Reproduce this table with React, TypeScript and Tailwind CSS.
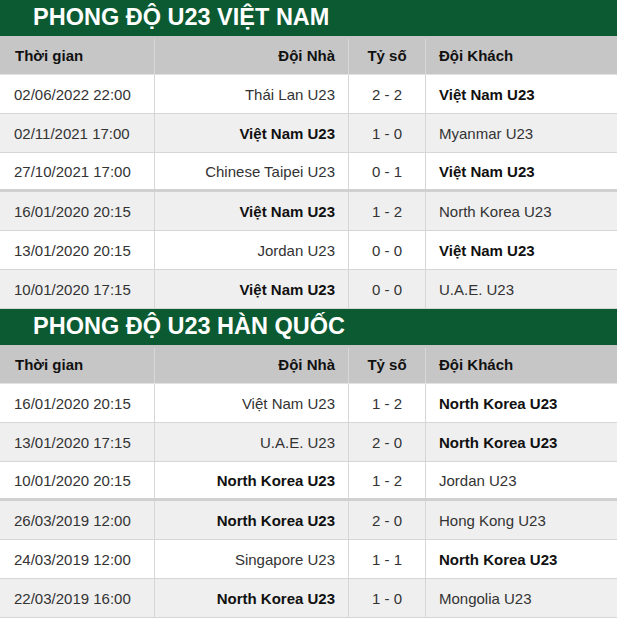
type Match = {
  time: string;
  home: string;
  score: string;
  away: string;
  homeBold?: boolean;
  awayBold?: boolean;
};

const vietnam: Match[] = [
  { time: "02/06/2022 22:00", home: "Thái Lan U23", score: "2 - 2", away: "Việt Nam U23", awayBold: true },
  { time: "02/11/2021 17:00", home: "Việt Nam U23", score: "1 - 0", away: "Myanmar U23", homeBold: true },
  { time: "27/10/2021 17:00", home: "Chinese Taipei U23", score: "0 - 1", away: "Việt Nam U23", awayBold: true },
  { time: "16/01/2020 20:15", home: "Việt Nam U23", score: "1 - 2", away: "North Korea U23", homeBold: true },
  { time: "13/01/2020 20:15", home: "Jordan U23", score: "0 - 0", away: "Việt Nam U23", awayBold: true },
  { time: "10/01/2020 17:15", home: "Việt Nam U23", score: "0 - 0", away: "U.A.E. U23", homeBold: true },
];

const korea: Match[] = [
  { time: "16/01/2020 20:15", home: "Việt Nam U23", score: "1 - 2", away: "North Korea U23", awayBold: true },
  { time: "13/01/2020 17:15", home: "U.A.E. U23", score: "2 - 0", away: "North Korea U23", awayBold: true },
  { time: "10/01/2020 20:15", home: "North Korea U23", score: "1 - 2", away: "Jordan U23", homeBold: true },
  { time: "26/03/2019 12:00", home: "North Korea U23", score: "2 - 0", away: "Hong Kong U23", homeBold: true },
  { time: "24/03/2019 12:00", home: "Singapore U23", score: "1 - 1", away: "North Korea U23", awayBold: true },
  { time: "22/03/2019 16:00", home: "North Korea U23", score: "1 - 0", away: "Mongolia U23", homeBold: true },
];

const cols = "grid grid-cols-[155px_194px_77px_1fr]";

function FormTable({ title, matches }: { title: string; matches: Match[] }) {
  return (
    <section>
      <h2 className="flex h-[36px] items-center bg-[#0b5a32] pl-[33px] text-[23.5px] font-bold leading-none text-white">
        {title}
      </h2>
      <div className={`${cols} h-[39px] border-b border-[#e2e2e2] bg-[#c6c6c6] pt-[3px] text-[15px] font-bold text-[#111]`}>
        <div className="flex items-center border-r border-[#d8d8d8] pl-[15px]">Thời gian</div>
        <div className="flex items-center justify-end border-r border-[#d8d8d8] pr-[13px]">Đội Nhà</div>
        <div className="flex items-center justify-center border-r border-[#d8d8d8]">Tỷ số</div>
        <div className="flex items-center pl-[13px]">Đội Khách</div>
      </div>
      {matches.map((m, i) => (
        <div
          key={i}
          className={`${cols} h-[39px] border-b text-[15px] text-[#333] ${i % 2 ? "bg-[#efefef]" : "bg-white"} ${
            i === 2 ? "border-b-[3px] border-[#d0d0d0]" : "border-[#d6d6d6]"
          }`}
        >
          <div className="flex items-center border-r border-[#d6d6d6] pt-[2px] pl-[14px]">{m.time}</div>
          <div
            className={`flex items-center justify-end border-r border-[#d6d6d6] pt-[2px] pr-[13px] ${
              m.homeBold ? "font-bold text-[#111]" : ""
            }`}
          >
            {m.home}
          </div>
          <div className="flex items-center justify-center border-r border-[#d6d6d6] pt-[2px]">{m.score}</div>
          <div className={`flex items-center pt-[2px] pl-[13px] ${m.awayBold ? "font-bold text-[#111]" : ""}`}>
            {m.away}
          </div>
        </div>
      ))}
    </section>
  );
}

export default function App() {
  return (
    <div className="w-[617px] bg-white font-['Liberation_Sans',Arial,sans-serif]">
      <FormTable title="PHONG ĐỘ U23 VIỆT NAM" matches={vietnam} />
      <FormTable title="PHONG ĐỘ U23 HÀN QUỐC" matches={korea} />
    </div>
  );
}
